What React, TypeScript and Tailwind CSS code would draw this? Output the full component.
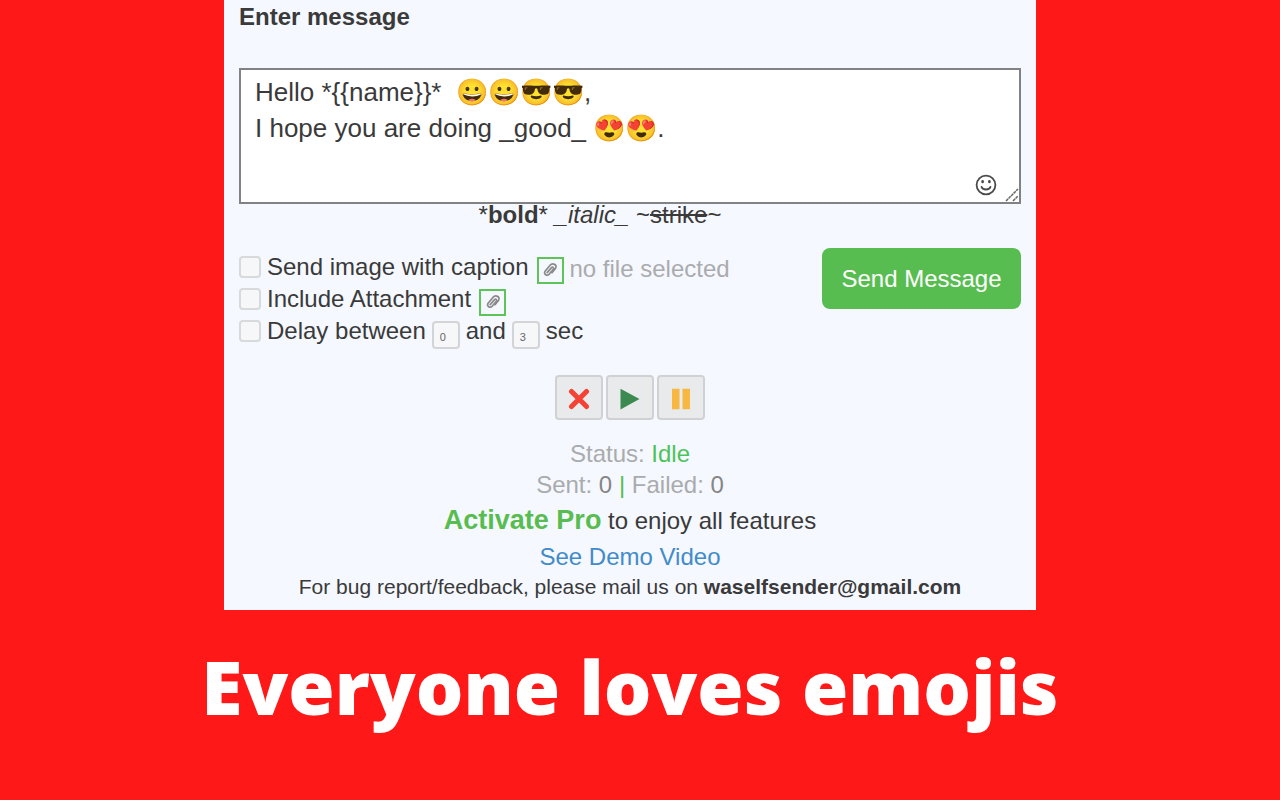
import { useState } from "react";

function Clip() {
  return (
    <svg viewBox="0 0 16 16" className="h-4 w-4" fill="none" stroke="#8a8a8a" strokeWidth="1.7" strokeLinecap="round" aria-hidden="true">
      <path d="M5.200 10.600 9.500 5.600c1.200-1.300 2.900.2 1.800 1.600L7.200 12.200C5.200 14.500 1.100 12.200 3.100 9.300L8.100 3.200C10.500.6 15.600 2.600 13.600 6.200L10 10.700" />
    </svg>
  );
}

const check = "h-[22px] w-[22px] shrink-0 appearance-none rounded border-2 border-[#d8d9db] bg-[#f6f7f9] checked:bg-[#58bd50]";
const row = "flex h-8 items-center";
const rowLabel = "pl-[6px]";
const attach = "ml-2 mr-1.5 mt-1.5 flex h-[27px] w-[27px] shrink-0 items-center justify-center border-2 border-[#5cc458]";
const delay = "mx-1.5 mt-2 h-7 w-7 rounded border-2 border-[#d3d4d6] bg-[#f6f7f9] pl-1.5 pt-1 text-[11px] text-[#666]";
const control = "flex h-[45px] w-12 items-center justify-center rounded border-2 border-[#d0d1d2] bg-[#e9eaeb] pt-0.5";

export default function App() {
  const [message, setMessage] = useState("Hello *{{name}}*  😀😀😎😎,\nI hope you are doing _good_ 😍😍.");
  const [from, setFrom] = useState("0");
  const [to, setTo] = useState("3");

  return (
    <main className="flex min-h-screen flex-col items-center bg-[#ff1818] pr-5 font-['Liberation_Sans',Arial,sans-serif] text-2xl text-[#3a3a3a]">
      <section className="w-full max-w-[812px] bg-[#f5f8fe] px-[15px] pb-[10px]">
        <label htmlFor="message" className="block pt-px font-bold leading-8">Enter message</label>
        <div className="relative mt-[35px]">
          <textarea
            id="message"
            value={message}
            onChange={(e) => setMessage(e.target.value)}
            className="block h-[136px] w-full resize-none overflow-hidden border-2 border-[#808284] bg-white px-[14px] py-1 text-[26px] leading-9"
          />
          <button type="button" aria-label="Insert emoji" className="absolute bottom-2 right-6">
            <svg viewBox="0 0 22 22" className="h-[22px] w-[22px]" fill="none" stroke="#4a4a4a" strokeWidth="1.800" strokeLinecap="round" aria-hidden="true">
              <circle cx="11" cy="11" r="9.400" />
              <path d="M7.600 7.200v.8M14.400 7.200v.8" strokeWidth="2.600" />
              <path d="M6.500 12.800c1 3.600 8 3.600 9 0" />
            </svg>
          </button>
          <svg viewBox="0 0 14 14" className="pointer-events-none absolute bottom-[2px] right-[2px] h-[14px] w-[14px]" stroke="#666" strokeWidth="1.500" strokeDasharray="3 .6" aria-hidden="true">
            <path d="M1 13 13 1M8 13l5-5" />
          </svg>
        </div>

        <p className="pr-[60px] text-center leading-[22px]">
          *<b>bold</b>* <i>_italic_</i> ~<s>strike</s>~
        </p>

        <div className="mt-[22px] flex items-start justify-between">
          <div className="pt-[3px]">
            <div className={row}>
              <input id="caption" type="checkbox" className={check} />
              <label htmlFor="caption" className={rowLabel}>Send image with caption</label>
              <button type="button" aria-label="Choose image" className={attach}><Clip /></button>
              <span className="pt-1 text-[#aaabad]">no file selected</span>
            </div>
            <div className={row}>
              <input id="attachment" type="checkbox" className={check} />
              <label htmlFor="attachment" className={rowLabel}>Include Attachment</label>
              <button type="button" aria-label="Choose attachment" className={attach}><Clip /></button>
            </div>
            <div className={row}>
              <input id="delay" type="checkbox" className={check} />
              <label htmlFor="delay" className={rowLabel}>Delay between</label>
              <input aria-label="Minimum delay" value={from} onChange={(e) => setFrom(e.target.value)} className={delay} />
              <label htmlFor="maximum">and</label>
              <input id="maximum" value={to} onChange={(e) => setTo(e.target.value)} className={delay} />
              <span>sec</span>
            </div>
          </div>
          <button type="button" className="h-[61px] w-[199px] rounded-lg bg-[#58bd50] text-white">Send Message</button>
        </div>

        <div className="mt-7 flex justify-center gap-[3px]">
          <button type="button" aria-label="Stop" className={control}>
            <svg viewBox="0 0 22 22" className="h-[22px] w-[22px]" stroke="#f44336" strokeWidth="5" strokeLinecap="round" aria-hidden="true">
              <path d="M3.500 3.500 18.500 18.500M18.500 3.500 3.500 18.500" />
            </svg>
          </button>
          <button type="button" aria-label="Start" className={control}>
            <svg viewBox="0 0 22 22" className="h-[22px] w-[22px]" fill="#3c8a52" aria-hidden="true">
              <path d="M1.500.8 20.500 11 1.500 21.500Z" />
            </svg>
          </button>
          <button type="button" aria-label="Pause" className={control}>
            <svg viewBox="0 0 22 22" className="h-[22px] w-[22px]" fill="#f8b740" aria-hidden="true">
              <path d="M2 .7h7.500v20.600H2zM12.500.7H20v20.600h-7.500z" />
            </svg>
          </button>
        </div>

        <div className="mt-[18px] text-center">
          <p className="leading-[31px] text-[#aaabad]">Status: <span className="text-[#4cc35a]">Idle</span></p>
          <p className="leading-[31px] text-[#aaabad]">
            Sent: <span className="text-[#858585]">0</span> <span className="text-[#58bd50]">|</span> Failed: <span className="text-[#858585]">0</span>
          </p>
          <p className="leading-10">
            <a href="#activate" className="text-[27px] font-bold text-[#58bd50]">Activate Pro</a> to enjoy all features
          </p>
          <p className="leading-8"><a href="#demo" className="text-[#428bca]">See Demo Video</a></p>
          <p className="text-[21px] leading-[27px]">
            For bug report/feedback, please mail us on <b>waselfsender@gmail.com</b>
          </p>
        </div>
      </section>
      <h1 className="mt-[21px] font-['Open_Sans',sans-serif] text-[75px] font-extrabold leading-[110px] text-white">Everyone loves emojis</h1>
    </main>
  );
}
